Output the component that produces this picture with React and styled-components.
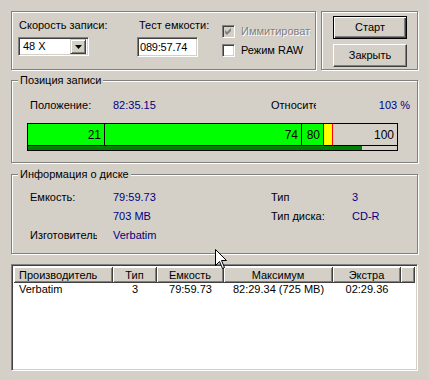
import React from "react";
import styled, { createGlobalStyle } from "styled-components";

const GlobalStyle = createGlobalStyle`
  body {
    margin: 0;
    background: #d4d0c8;
    font-family: "Liberation Sans", Arial, sans-serif;
    font-size: 11px;
    color: #000;
  }
`;

const Window = styled.div`
  position: relative;
  width: 429px;
  height: 380px;
  box-sizing: border-box;
  padding: 11px 11px 0 11px;
  display: flex;
  flex-direction: column;
  background: #d4d0c8;
  line-height: 13px;
`;

const TopRow = styled.div`
  display: flex;
  gap: 5px;
`;

const Panel = styled.div`
  box-sizing: border-box;
  width: ${(p) => p.$w}px;
  height: 59px;
  border: 1px solid #808080;
  box-shadow: inset 1px 1px 0 #fff, 1px 1px 0 #fff;
`;

const SettingsPanel = styled(Panel)`
  display: grid;
  grid-template-columns: 119px 85px auto;
  padding: 7px 0 0 6px;
`;

const ButtonsPanel = styled(Panel)`
  display: flex;
  flex-direction: column;
  gap: 5px;
  padding: 4px 0 0 11px;
`;

const Field = styled.div`
  display: flex;
  flex-direction: column;
  gap: 5px;
`;

const Label = styled.span`
  padding-left: ${(p) => p.$pad || 0}px;
  white-space: nowrap;
`;

const Sunken = styled.div`
  box-sizing: border-box;
  border: 1px solid;
  border-color: #808080 #fff #fff #808080;
  box-shadow: inset 1px 1px 0 #404040, inset -1px -1px 0 #d4d0c8;
  background: #fff;
`;

const Combo = styled(Sunken)`
  width: 71px;
  height: 19px;
  display: flex;
  align-items: center;
  justify-content: space-between;
  padding: 2px 2px 2px 4px;
`;

const ComboButton = styled.div`
  box-sizing: border-box;
  width: 16px;
  height: 15px;
  background: #d4d0c8;
  border: 1px solid;
  border-color: #d4d0c8 #404040 #404040 #d4d0c8;
  box-shadow: inset 1px 1px 0 #fff, inset -1px -1px 0 #808080;
  display: flex;
  align-items: center;
  justify-content: center;
`;

const TextBox = styled(Sunken)`
  width: 61px;
  height: 20px;
  padding: 3px 0 0 2px;
  letter-spacing: -0.2px;
`;

const Checks = styled.div`
  display: flex;
  flex-direction: column;
  gap: 6px;
  padding-top: 6px;
`;

const CheckRow = styled.div`
  display: flex;
  align-items: center;
  gap: 6px;
  height: 13px;
`;

const CheckBox = styled(Sunken)`
  width: 13px;
  height: 13px;
  background: ${(p) => (p.$disabled ? "#d4d0c8" : "#fff")};
  display: flex;
  align-items: center;
  justify-content: center;
`;

const CheckLabel = styled.span`
  width: ${(p) => p.$w}px;
  overflow: hidden;
  white-space: nowrap;
  color: ${(p) => (p.$disabled ? "#808080" : "#000")};
  text-shadow: ${(p) => (p.$disabled ? "1px 1px 0 #fff" : "none")};
`;

const Button = styled.div`
  box-sizing: border-box;
  width: 74px;
  height: 23px;
  display: flex;
  align-items: center;
  justify-content: center;
  border: 1px solid;
  border-color: ${(p) => (p.$default ? "#000" : "#fff #404040 #404040 #fff")};
  box-shadow: ${(p) =>
    p.$default
      ? "inset 1px 1px 0 #fff, inset -1px -1px 0 #404040, inset -2px -2px 0 #808080"
      : "inset -1px -1px 0 #808080"};
`;

const Group = styled.fieldset`
  margin: ${(p) => p.$top}px 0 0 0;
  padding: ${(p) => p.$pad};
  min-width: 0;
  width: 407px;
  box-sizing: border-box;
  border: 1px solid #808080;
  box-shadow: inset 1px 1px 0 #fff, 1px 1px 0 #fff;
`;

const Legend = styled.legend`
  margin-left: 6px;
  padding: 0 2px;
  background: #d4d0c8;
  line-height: 13px;
`;

const InfoGrid = styled.div`
  display: grid;
  grid-template-columns: 83px 158px 81px auto;
  grid-auto-rows: ${(p) => p.$row || 19}px;
  padding-left: 18px;
`;

const Value = styled.span`
  color: #000080;
  white-space: nowrap;
  text-align: ${(p) => (p.$right ? "right" : "left")};
  padding-right: ${(p) => (p.$right ? 7 : 0)}px;
`;

const Clip = styled.span`
  width: ${(p) => p.$w}px;
  overflow: hidden;
  white-space: nowrap;
`;

const Bar = styled.div`
  margin: 11px 0 0 15px;
  width: 371px;
  box-sizing: border-box;
  border: 1px solid #000;
  display: flex;
  flex-direction: column;
`;

const Segments = styled.div`
  display: flex;
  height: 21px;
  border-bottom: 1px solid #000;
`;

const Segment = styled.div`
  box-sizing: border-box;
  width: ${(p) => p.$w}px;
  flex: ${(p) => (p.$w ? "none" : "1")};
  background: ${(p) => p.$bg};
  border-right: ${(p) => (p.$line ? `1px solid ${p.$line}` : "none")};
  text-align: right;
  padding: 5px 3px 0 0;
  font-size: 12px;
  line-height: 13px;
`;

const Strip = styled.div`
  height: 4px;
  background: linear-gradient(to right, #008000 334px, #d4d0c8 334px);
`;

const List = styled(Sunken)`
  margin-top: 10px;
  width: 407px;
  height: 107px;
  padding: 2px;
`;

const Columns = styled.div`
  display: grid;
  grid-template-columns: 99px 44px 67px 109px 68px 1fr;
`;

const HeadCell = styled.div`
  box-sizing: border-box;
  height: 16px;
  background: #d4d0c8;
  border-right: 1px solid #404040;
  border-bottom: 1px solid #404040;
  box-shadow: inset 1px 1px 0 #fff, inset -1px -1px 0 #808080;
  text-align: ${(p) => p.$align || "center"};
  padding: 2px ${(p) => (p.$align ? 5 : 0)}px 0;
  white-space: nowrap;
  overflow: hidden;
`;

const Cell = styled.div`
  text-align: ${(p) => p.$align || "center"};
  padding-left: ${(p) => (p.$align ? 5 : 0)}px;
  white-space: nowrap;
`;

const Cursor = styled.svg`
  position: absolute;
  left: 215px;
  top: 249px;
`;

function Check() {
  return (
    <svg width="7" height="7" viewBox="0 0 7 7">
      <path d="M0 2 L2 4 L6 0 L6 3 L2 7 L0 5 Z" fill="#808080" />
    </svg>
  );
}

function App() {
  return (
    <Window>
      <GlobalStyle />
      <TopRow>
        <SettingsPanel $w={305}>
          <Field>
            <Label $pad={1}>Скорость записи:</Label>
            <Combo>
              <span>48 X</span>
              <ComboButton>
                <svg width="7" height="4" viewBox="0 0 7 4">
                  <path d="M0 0 H7 L3.5 4 Z" fill="#000" />
                </svg>
              </ComboButton>
            </Combo>
          </Field>
          <Field>
            <Label $pad={2}>Тест емкости:</Label>
            <TextBox>089:57.74</TextBox>
          </Field>
          <Checks>
            <CheckRow>
              <CheckBox $disabled>
                <Check />
              </CheckBox>
              <CheckLabel $w={70} $disabled>
                Иммитировать
              </CheckLabel>
            </CheckRow>
            <CheckRow>
              <CheckBox />
              <CheckLabel $w={70}>Режим RAW</CheckLabel>
            </CheckRow>
          </Checks>
        </SettingsPanel>
        <ButtonsPanel $w={97}>
          <Button $default>Старт</Button>
          <Button>Закрыть</Button>
        </ButtonsPanel>
      </TopRow>

      <Group $top={4} $pad="12px 0 11px 0">
        <Legend>Позиция записи</Legend>
        <InfoGrid $row={13}>
          <span>Положение:</span>
          <Value>82:35.15</Value>
          <Clip $w={45}>Относительно</Clip>
          <Value $right>103 %</Value>
        </InfoGrid>
        <Bar>
          <Segments>
            <Segment $w={77} $bg="#00ff00" $line="#000">
              21
            </Segment>
            <Segment $w={197} $bg="#00ff00" $line="#000">
              74
            </Segment>
            <Segment $w={22} $bg="#00ff00" $line="#0000ff">
              80
            </Segment>
            <Segment $w={9} $bg="#ffff00" $line="#ff0000" />
            <Segment $bg="#d4d0c8">100</Segment>
          </Segments>
          <Strip />
        </Bar>
      </Group>

      <Group $top={5} $pad="10px 0 5px 0">
        <Legend>Информация о диске</Legend>
        <InfoGrid>
          <span>Емкость:</span>
          <Value>79:59.73</Value>
          <span>Тип</span>
          <Value>3</Value>
          <span />
          <Value>703 MB</Value>
          <span>Тип диска:</span>
          <Value>CD-R</Value>
          <Clip $w={67}>Изготовитель</Clip>
          <Value>Verbatim</Value>
        </InfoGrid>
      </Group>

      <List>
        <Columns>
          <HeadCell $align="left">Производитель</HeadCell>
          <HeadCell>Тип</HeadCell>
          <HeadCell>Емкость</HeadCell>
          <HeadCell>Максимум</HeadCell>
          <HeadCell>Экстра</HeadCell>
          <HeadCell />
        </Columns>
        <Columns>
          <Cell $align="left">Verbatim</Cell>
          <Cell>3</Cell>
          <Cell>79:59.73</Cell>
          <Cell>82:29.34 (725 MB)</Cell>
          <Cell>02:29.36</Cell>
          <Cell />
        </Columns>
      </List>

      <Cursor width="12" height="20" viewBox="0 0 12 20">
        <path
          d="M0.5 0.5 L0.5 16.5 L4.5 12.5 L7.5 19.5 L9.5 18.5 L6.5 11.5 L11.5 11.5 Z"
          fill="#fff"
          stroke="#000"
          strokeWidth="1"
        />
      </Cursor>
    </Window>
  );
}

export default App;
